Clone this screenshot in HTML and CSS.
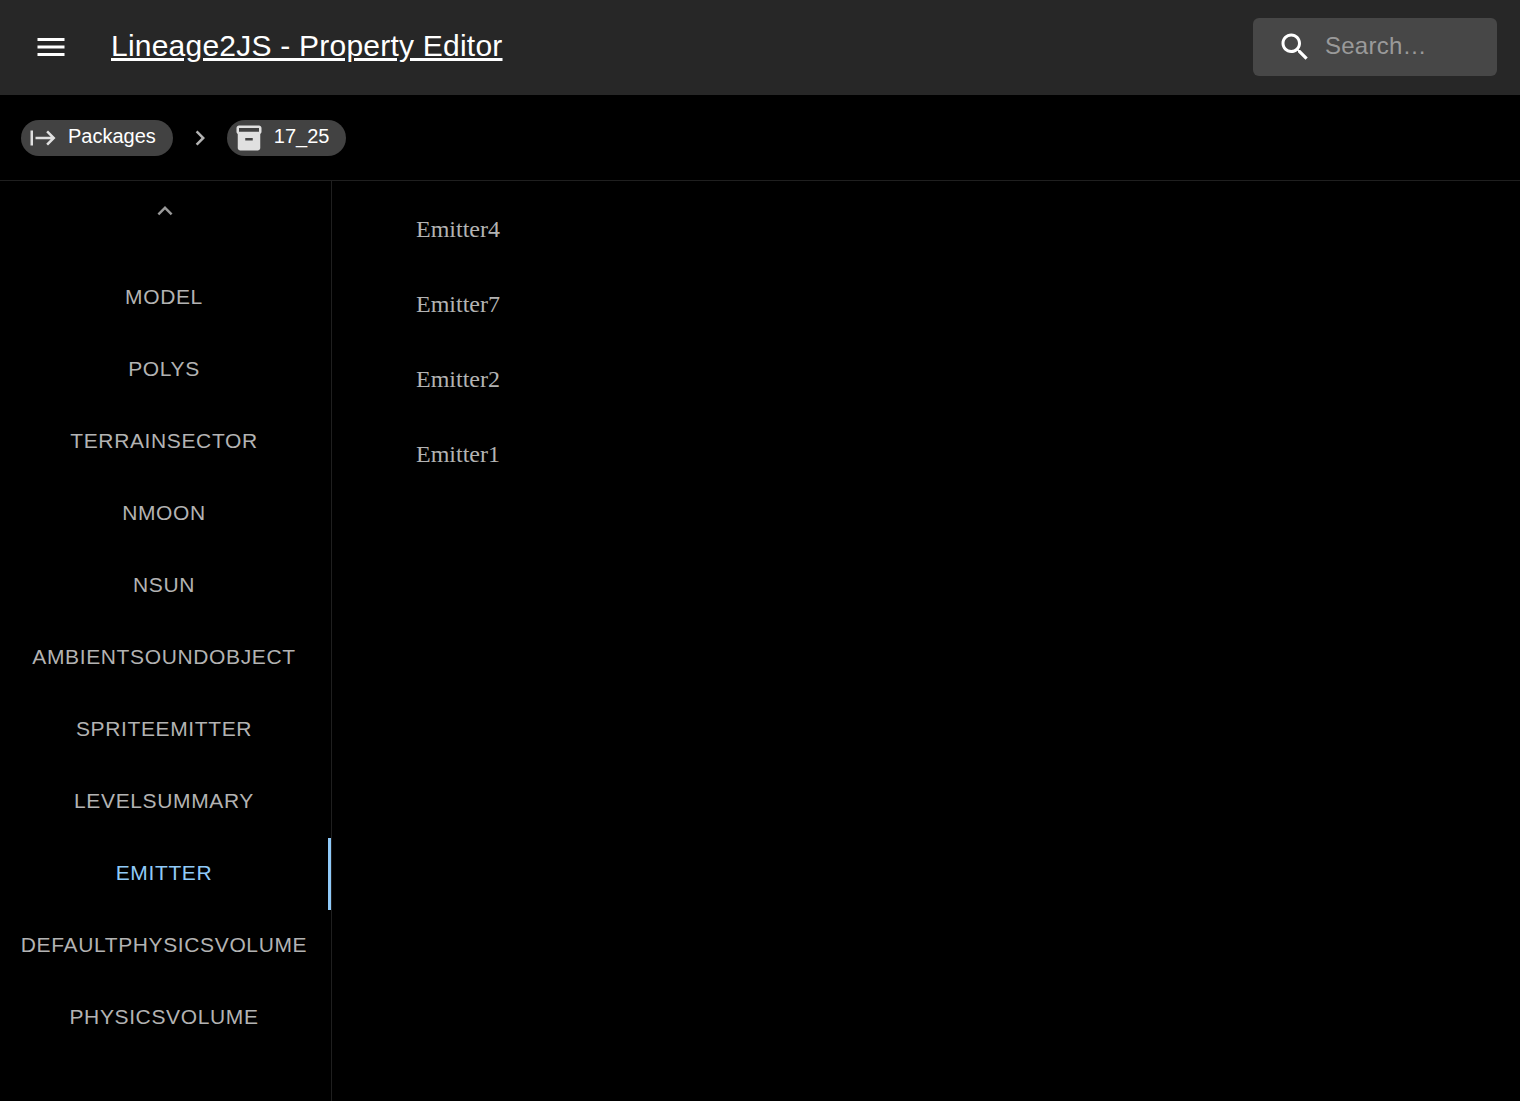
FILE: index.html
```html
<!DOCTYPE html>
<html lang="en">
<head>
  <meta charset="utf-8">
  <meta name="viewport" content="width=device-width, initial-scale=1">
  <title>Lineage2JS - Property Editor</title>
  <link rel="stylesheet" href="styles.css">
</head>
<body>
  <div class="app">
    <header class="app-bar">
      <button class="menu-button" type="button" aria-label="Open drawer">
        <svg class="icon icon-large" viewBox="0 0 24 24" aria-hidden="true"><path d="M3 18h18v-2H3v2zm0-5h18v-2H3v2zm0-7v2h18V6H3z"/></svg>
      </button>
      <a class="title" href="#">Lineage2JS - Property Editor</a>
      <label class="search">
        <svg class="icon icon-large" viewBox="0 0 24 24" aria-hidden="true"><path d="M15.5 14h-.79l-.28-.27C15.41 12.59 16 11.11 16 9.5 16 5.91 13.09 3 9.5 3S3 5.91 3 9.5 5.91 16 9.5 16c1.61 0 3.09-.59 4.23-1.57l.27.28v.79l5 4.99L20.49 19l-4.99-5zm-6 0C7.01 14 5 11.99 5 9.5S7.01 5 9.5 5 14 7.01 14 9.5 11.99 14 9.5 14z"/></svg>
        <input class="search-input" type="text" placeholder="Search…" aria-label="search">
      </label>
    </header>

    <nav class="breadcrumbs" aria-label="breadcrumb">
      <a class="chip" href="#">
        <svg class="icon" viewBox="0 0 24 24" aria-hidden="true"><path d="M14.59 7.41 18.17 11H6v2h12.17l-3.59 3.59L16 18l6-6-6-6-1.41 1.41zM2 6v12h2V6H2z"/></svg>
        <span>Packages</span>
      </a>
      <svg class="icon separator" viewBox="0 0 24 24" aria-hidden="true"><path d="M10 6 8.59 7.41 13.17 12l-4.58 4.59L10 18l6-6z"/></svg>
      <a class="chip" href="#">
        <svg class="icon" viewBox="0 0 24 24" aria-hidden="true"><path d="M20 2H4c-1 0-2 .9-2 2v3.01c0 .72.43 1.34 1 1.69V20c0 1.1 1.1 2 2 2h14c.9 0 2-.9 2-2V8.7c.57-.35 1-.97 1-1.69V4c0-1.1-1-2-2-2zm-5 12H9v-2h6v2zm5-7H4V4h16v3z"/></svg>
        <span>17_25</span>
      </a>
    </nav>

    <div class="workspace">
      <aside class="sidebar">
        <button class="scroll-button" type="button" aria-label="Scroll up">
          <svg class="icon" viewBox="0 0 24 24" aria-hidden="true"><path d="M7.41 15.41 12 10.83l4.59 4.58L18 14l-6-6-6 6z"/></svg>
        </button>
        <div class="tabs" role="tablist" aria-orientation="vertical">
          <button class="tab" type="button" role="tab">Model</button>
          <button class="tab" type="button" role="tab">Polys</button>
          <button class="tab" type="button" role="tab">TerrainSector</button>
          <button class="tab" type="button" role="tab">NMoon</button>
          <button class="tab" type="button" role="tab">NSun</button>
          <button class="tab" type="button" role="tab">AmbientSoundObject</button>
          <button class="tab" type="button" role="tab">SpriteEmitter</button>
          <button class="tab" type="button" role="tab">LevelSummary</button>
          <button class="tab tab-selected" type="button" role="tab" aria-selected="true">Emitter</button>
          <button class="tab" type="button" role="tab">DefaultPhysicsVolume</button>
          <button class="tab" type="button" role="tab">PhysicsVolume</button>
        </div>
      </aside>

      <main class="content">
        <ul class="objects">
          <li class="object">Emitter4</li>
          <li class="object">Emitter7</li>
          <li class="object">Emitter2</li>
          <li class="object">Emitter1</li>
        </ul>
      </main>
    </div>
  </div>
</body>
</html>
```

FILE: styles.css
```css
* {
  box-sizing: border-box;
}

body {
  margin: 0;
  background: #000;
  color: #fff;
  font-family: "Liberation Sans", Arial, sans-serif;
}

button {
  border: 0;
  padding: 0;
  background: transparent;
  color: inherit;
  font-family: inherit;
  cursor: pointer;
}

.app {
  display: flex;
  flex-direction: column;
  min-height: 100vh;
}

.icon {
  display: block;
  flex: none;
  width: 30px;
  height: 30px;
  fill: currentColor;
}

.icon-large {
  width: 36px;
  height: 36px;
}

/* App bar */

.app-bar {
  display: flex;
  align-items: center;
  padding: 18px 23px 19px 15px;
  background: #272727;
}

.menu-button {
  margin-right: 24px;
  padding: 0 18px;
}

.title {
  padding-bottom: 2px;
  color: #fff;
  font-size: 30px;
  line-height: 48px;
  letter-spacing: 0.0075em;
  white-space: nowrap;
}

.search {
  display: flex;
  align-items: center;
  gap: 12px;
  width: 244px;
  height: 58px;
  margin-left: auto;
  padding: 0 12px 0 24px;
  border-radius: 6px;
  background: #474747;
}

.search-input {
  flex: 1;
  min-width: 0;
  border: 0;
  padding: 0 0 2px;
  outline: 0;
  background: transparent;
  color: #fff;
  font: 24px "Liberation Sans", Arial, sans-serif;
  letter-spacing: 0.01em;
}

.search-input::placeholder {
  color: #9a9a9a;
}

/* Breadcrumbs */

.breadcrumbs {
  display: flex;
  align-items: center;
  gap: 12px;
  padding: 25px 21px 24px;
  border-bottom: 1px solid #1f1f1f;
}

.chip {
  display: flex;
  align-items: center;
  gap: 10px;
  height: 36px;
  padding: 0 17px 0 7px;
  border-radius: 18px;
  background: #424242;
  color: #fff;
  font-size: 20px;
  line-height: 24px;
  text-decoration: none;
}

.chip .icon {
  color: #e0e0e0;
}

.chip span {
  padding-bottom: 4px;
}

.separator {
  color: #b3b3b3;
}

/* Workspace */

.workspace {
  display: flex;
  flex: 1;
}

.sidebar {
  display: flex;
  flex: none;
  flex-direction: column;
  width: 332px;
  border-right: 1px solid #1f1f1f;
}

.scroll-button {
  display: flex;
  align-items: center;
  justify-content: center;
  height: 60px;
  padding-right: 2px;
  color: #999;
}

.tabs {
  display: flex;
  flex-direction: column;
  padding-top: 21px;
}

.tab {
  height: 72px;
  padding-bottom: 2px;
  border-right: 3px solid transparent;
  color: #b3b3b3;
  font-size: 21px;
  letter-spacing: 0.03em;
  text-transform: uppercase;
}

.tab-selected {
  border-color: #90caf9;
  color: #90caf9;
}

.content {
  flex: 1;
  min-width: 0;
  padding: 11px 36px 12px 84px;
}

.objects {
  margin: 0;
  padding: 0;
  list-style: none;
}

.object {
  color: #b3b3b3;
  font-family: "Liberation Serif", "Times New Roman", serif;
  font-size: 24px;
  line-height: 75px;
}
```
